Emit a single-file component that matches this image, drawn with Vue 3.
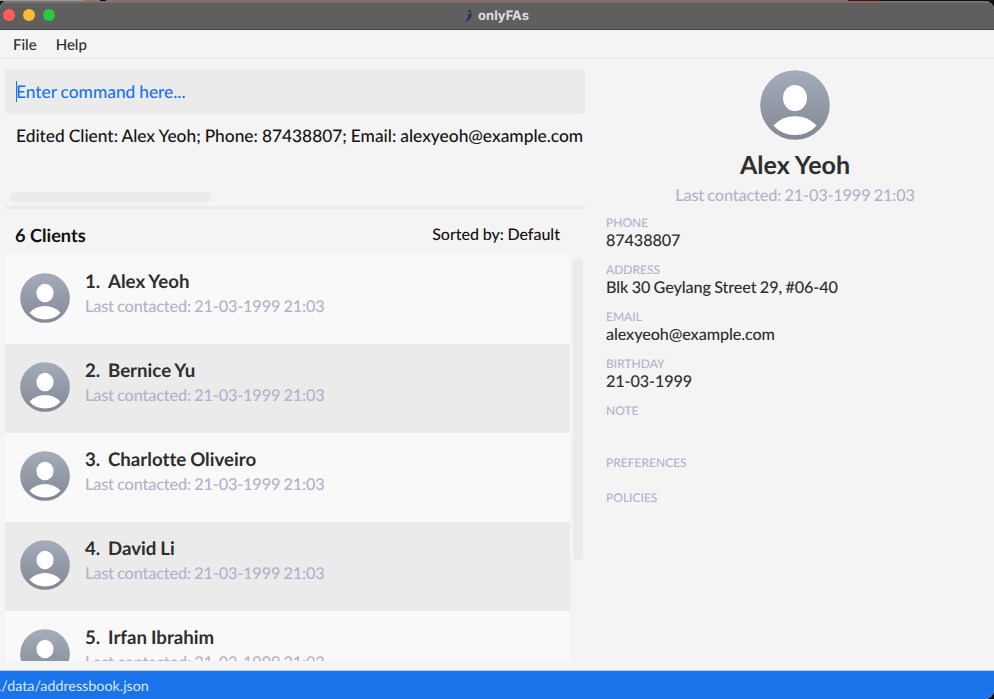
<script setup>
import { h } from 'vue'

const contacted = 'Last contacted: 21-03-1999 21:03'
const clients = ['Alex Yeoh', 'Bernice Yu', 'Charlotte Oliveiro', 'David Li', 'Irfan Ibrahim']
const details = [
  { label: 'PHONE', value: '87438807' },
  { label: 'ADDRESS', value: 'Blk 30 Geylang Street 29, #06-40' },
  { label: 'EMAIL', value: 'alexyeoh@example.com' },
  { label: 'BIRTHDAY', value: '21-03-1999' },
]

// Default profile picture: head and shoulders on a shaded disc
const Avatar = () =>
  h('svg', { viewBox: '0 0 70 70' }, [
    h('defs', [
      h('linearGradient', { id: 'disc', x1: 0, y1: 0, x2: 0, y2: 1 }, [
        h('stop', { offset: '0', 'stop-color': '#a5acba' }),
        h('stop', { offset: '1', 'stop-color': '#828894' }),
      ]),
    ]),
    h('circle', { cx: 35, cy: 35, r: 34.8, fill: 'url(#disc)' }),
    h('ellipse', { cx: 35, cy: 28, rx: 12, ry: 13.1, fill: '#fff' }),
    h('path', { d: 'M13.3 55.5Q22 46.2 35 46.2T56.7 55.5Q48 65 35 65T13.3 55.5Z', fill: '#fff' }),
  ])
</script>

<template>
  <div class="screen">
    <div class="desktop"><i class="d1"></i><i class="d2"></i><i class="d3"></i><i class="d4"></i><i class="d5"></i></div>
    <div class="window">
      <header class="titlebar">
        <div class="lights"><i class="red"></i><i class="amber"></i><i class="green"></i></div>
        <div class="title">
          <svg class="logo" viewBox="0 0 14 14">
            <path d="M5.6 12.8C10.4 12 12.8 9 12.9 4L9.4 5C9 7.4 9 10.2 5.6 12.8Z" fill="#333638" />
            <circle cx="10.8" cy="2" r="1.5" fill="#36393d" />
            <path d="M3.4 3.8C7.2 4.6 9 8.2 6 12.4C4.8 12.1 3.6 11.2 3 9.9C6 8.8 6 6.2 3.4 3.8Z" fill="#4d6690" />
            <path d="M.6 6L4.2 7.3L1.6 9.5Z" fill="#485d7e" />
          </svg>
          <span>onlyFAs</span>
        </div>
      </header>
      <nav class="menu"><span>File</span><span>Help</span></nav>
      <main class="content">
        <section class="left">
          <div class="command"><i class="caret"></i><span>Enter command here...</span></div>
          <div class="result">
            <p>Edited Client: Alex Yeoh; Phone: 87438807; Email: alexyeoh@example.com</p>
            <i class="hscroll"></i>
          </div>
          <div class="heading"><h2>6 Clients</h2><span>Sorted by: Default</span></div>
          <div class="list-area">
            <ul class="list">
              <li v-for="(name, i) in clients" :key="name">
                <Avatar class="avatar" />
                <div class="who">
                  <h3><span class="num">{{ i + 1 }}.</span>{{ name }}</h3>
                  <p>{{ contacted }}</p>
                </div>
              </li>
            </ul>
            <i class="vscroll"></i>
          </div>
        </section>
        <aside class="right">
          <Avatar class="portrait" />
          <h1>Alex Yeoh</h1>
          <p class="last">{{ contacted }}</p>
          <dl>
            <div v-for="d in details" :key="d.label" class="field">
              <dt>{{ d.label }}</dt>
              <dd>{{ d.value }}</dd>
            </div>
            <div class="field note"><dt>NOTE</dt></div>
            <div class="field prefs"><dt>PREFERENCES</dt></div>
            <div class="field"><dt>POLICIES</dt></div>
          </dl>
        </aside>
      </main>
      <footer class="status">./data/addressbook.json</footer>
    </div>
  </div>
</template>

<style>
body { margin: 0; background: #000; }
</style>

<style scoped>
* { box-sizing: border-box; margin: 0; padding: 0; }
.screen { width: 994px; height: 699px; overflow: hidden; display: flex; flex-direction: column; background: #101010; font-family: Lato, sans-serif; font-weight: 500; color: #2e2e2e; white-space: nowrap; text-rendering: geometricPrecision; font-variant-ligatures: none; }
.desktop { height: 1px; flex: none; display: flex; }
.desktop i { height: 1px; }
.d1 { width: 84px; background: #a09a96; }
.d2 { width: 16px; background: #a86e62; }
.d3 { width: 6px; background: #111; }
.d4 { width: 742px; background: #9f6b60; }
.d5 { width: 32px; background: #650707; }
.window { flex: 1; min-height: 0; display: flex; flex-direction: column; background: #f4f4f4; border-radius: 7px 9px 9px 0; overflow: hidden; }
.titlebar { height: 29px; flex: none; position: relative; display: flex; align-items: center; justify-content: center; background: #5f5f5f; border-top: 2px solid #737373; border-bottom: 1px solid #454545; }
.lights { position: absolute; left: 3px; top: 6px; display: flex; gap: 8px; }
.lights i { width: 12px; height: 12px; border-radius: 50%; }
.red { background: #ff5f57; }
.amber { background: #febc2e; }
.green { background: #28c840; }
.title { display: flex; align-items: center; gap: 5px; padding: 0 6px 1px 0; font: 700 13px/16px Inter, sans-serif; color: #dedede; }
.logo { width: 14px; height: 14px; }
.menu { height: 29px; flex: none; display: flex; gap: 19px; padding-left: 13px; border-bottom: 1px solid #e9e9e9; font-size: 15px; line-height: 30px; }
.content { flex: 1; min-height: 0; display: flex; }
.left { width: 585px; flex: none; padding: 10px 0 9px 5px; display: flex; flex-direction: column; }
.command { height: 45px; flex: none; display: flex; align-items: center; padding-left: 11px; background: #ebebeb; border-radius: 4px; color: #1a73e8; font-size: 17.33px; word-spacing: -.5px; }
.caret { width: 1px; height: 21px; margin-right: -1px; background: #1a73e8; }
.result { height: 95px; flex: none; padding: 11px 0 0 11px; display: flex; flex-direction: column; justify-content: space-between; border-bottom: 3px solid #ebebeb; color: #151515; }
.result p { font-size: 17.33px; line-height: 21px; word-spacing: -.4px; }
.hscroll { width: 200px; height: 10px; margin: 0 0 4px -5px; background: #ebebeb; border-radius: 4px; }
.heading { height: 46px; flex: none; display: flex; justify-content: space-between; padding: 0 25px 0 10px; color: #111; }
.heading h2 { font-size: 18.2px; line-height: 52px; font-weight: 700; }
.heading span { font-size: 16px; line-height: 52px; word-spacing: -.4px; }
.list-area { flex: 1; min-height: 0; display: flex; gap: 3px; }
.list { width: 565px; overflow: hidden; list-style: none; }
.list li { height: 89px; display: flex; padding: 18px 0 0 15px; gap: 15px; background: #f9f9f9; }
.list li:nth-child(even) { background: #ebebeb; }
.avatar { width: 50px; height: 50px; flex: none; }
.who h3 { display: flex; margin-top: -4px; font-size: 18.67px; line-height: 24px; font-weight: 700; word-spacing: -.6px; }
.num { width: 23px; }
.who p { font-size: 16.3px; line-height: 24px; margin-top: 2px; color: #b4b2c9; letter-spacing: -.17px; word-spacing: -.6px; }
.vscroll { width: 10px; height: 301px; margin-top: 4px; background: #ebebeb; border-radius: 4px; }
.right { flex: 1; display: flex; flex-direction: column; padding: 11px 0 0 21px; }
.portrait { width: 70px; height: 70px; flex: none; margin-left: 154px; }
.right h1 { width: 378px; text-align: center; margin-top: 8px; font-size: 25px; line-height: 34px; font-weight: 700; }
.last { width: 378px; text-align: center; margin-top: 2px; font-size: 16.3px; line-height: 24px; color: #b4b2c9; letter-spacing: -.17px; word-spacing: -.6px; }
.right dl { margin-top: 7px; }
.field { height: 47px; }
.field.note { height: 52px; }
.field.prefs { height: 35px; }
.field dt { font-size: 12px; line-height: 15px; color: #b4b2c9; }
.field dd { font-size: 16.2px; line-height: 22px; letter-spacing: -.1px; word-spacing: -.6px; }
.status { height: 29px; flex: none; border-top: 1px solid #b5d2f5; background: #1a73e8; color: #d8e8ff; font-size: 14.3px; line-height: 32px; font-weight: 400; text-indent: -2px; }
</style>
